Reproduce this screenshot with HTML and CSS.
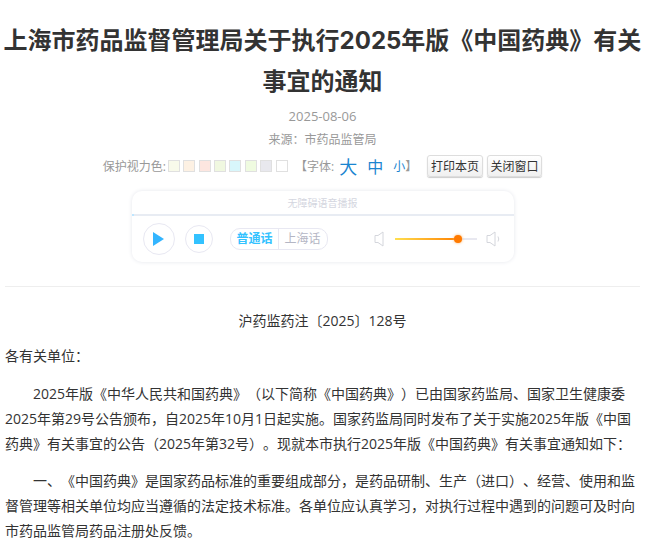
FILE: index.html
```html
<!DOCTYPE html>
<html lang="zh-CN">
<head>
    <meta charset="UTF-8">
    <title>上海市药品监督管理局关于执行2025年版《中国药典》有关事宜的通知</title>
    <link rel="stylesheet" href="styles.css">
</head>
<body>
    <div class="container">
        <h1 class="title">上海市药品监督管理局关于执行2025年版《中国药典》有关事宜的通知</h1>
        <div class="date">2025-08-06</div>
        <div class="source">来源：市药品监管局</div>
        <div class="tools">
            <span class="tools-label">保护视力色:</span>
            <span class="swatch s1"></span>
            <span class="swatch s2"></span>
            <span class="swatch s3"></span>
            <span class="swatch s4"></span>
            <span class="swatch s5"></span>
            <span class="swatch s6"></span>
            <span class="swatch s7"></span>
            <span class="swatch s8"></span>
            <span class="font-label">【字体:</span>
            <span class="size-big">大</span>
            <span class="size-mid">中</span>
            <span class="size-small">小</span>
            <span class="font-end">】</span>
            <button class="tool-button">打印本页</button>
            <button class="tool-button">关闭窗口</button>
        </div>
        <div class="player">
            <div class="player-title">无障碍语音播报<span class="progress-dot"></span></div>
            <div class="player-bar">
                <span class="round-button play">
                    <svg width="11" height="14" viewBox="0 0 11 14"><path d="M0 0L11 7L0 14Z" fill="#33b5ff"/></svg>
                </span>
                <span class="round-button stop"><span class="stop-square"></span></span>
                <div class="lang">
                    <span class="lang-item active">普通话</span>
                    <span class="lang-item">上海话</span>
                </div>
                <div class="volume">
                    <svg width="10" height="16" viewBox="0 0 10 16"><path d="M9 1V15L4 11.5H1V4.500H4Z" fill="none" stroke="#d4d6dc"/></svg>
                    <div class="track">
                        <div class="track-fill"></div>
                        <span class="track-knob"></span>
                    </div>
                    <svg width="16" height="16" viewBox="0 0 16 16"><path d="M9 1V15L4 11.500H1V4.500H4Z" fill="none" stroke="#d4d6dc"/><path d="M12 5.500Q13.500 8 12 10.500" fill="none" stroke="#d4d6dc"/></svg>
                </div>
            </div>
        </div>
        <div class="article">
            <p class="doc-no">沪药监药注〔2025〕128号</p>
            <p class="greeting">各有关单位：</p>
            <p class="para">2025年版《中华人民共和国药典》（以下简称《中国药典》）已由国家药监局、国家卫生健康委2025年第29号公告颁布，自2025年10月1日起实施。国家药监局同时发布了关于实施2025年版《中国药典》有关事宜的公告（2025年第32号）。现就本市执行2025年版《中国药典》有关事宜通知如下：</p>
            <p class="para">一、《中国药典》是国家药品标准的重要组成部分，是药品研制、生产（进口）、经营、使用和监督管理等相关单位均应当遵循的法定技术标准。各单位应认真学习，对执行过程中遇到的问题可及时向市药品监管局药品注册处反馈。</p>
        </div>
    </div>
</body>
</html>
```

FILE: styles.css
```css
body {
    margin: 0;
    background: #fff;
    font-family: "Open Sans", "Noto Sans CJK SC", sans-serif;
    color: #333;
    height: 546px;
    overflow: hidden;
    text-spacing-trim: space-all;
}
.container {
    padding: 20px 11px 0 5px;
}
.title {
    margin: 0 -2px;
    font-family: Inter, "Noto Sans CJK SC", sans-serif;
    font-size: 24px;
    line-height: 41px;
    font-weight: bold;
    text-align: center;
    color: #333;
}
.date, .source {
    font-size: 12px;
    color: #999;
    text-align: center;
}
.date {
    margin-top: 4px;
    line-height: 20px;
    font-size: 13px;
}
.source {
    margin-top: 4px;
    line-height: 20px;
}
.tools {
    display: flex;
    justify-content: center;
    align-items: center;
    height: 24px;
    margin-top: 4px;
    font-size: 12px;
    color: #999;
}
.tools-label {
    margin-right: 2px;
}
.swatch {
    box-sizing: border-box;
    width: 12px;
    height: 12px;
    margin-right: 3.400px;
    border: 1px solid #e0e0e0;
}
.s1 { background: #f8faea; }
.s2 { background: #fdf1e3; }
.s3 { background: #fde6e0; }
.s4 { background: #f0f8e0; }
.s5 { background: #d8f6fb; }
.s6 { background: #effbe0; }
.s7 { background: #e8e8ee; }
.s8 { background: #fff; }
.font-label {
    margin-left: 4px;
}
.size-big, .size-mid, .size-small {
    color: #1a85d0;
}
.size-big {
    font-size: 18px;
    margin-left: 5px;
}
.size-mid {
    font-size: 16px;
    margin-left: 10px;
}
.size-small {
    font-size: 12px;
    margin-left: 10px;
}
.font-end {
    margin-right: 6px;
}
.tool-button {
    width: 55.500px;
    height: 22px;
    margin-left: 4px;
    padding: 0;
    font-family: inherit;
    font-size: 12px;
    color: #333;
    background: linear-gradient(#fff, #f0f0f0);
    border: 1px solid #ddd;
    border-radius: 3px;
    box-shadow: 0 1px 1px #ccc;
}
.player {
    width: 382px;
    margin: 13px auto 0;
    border-radius: 10px;
    box-shadow: 0 0 4px #e4e6ec;
}
.player-title {
    position: relative;
    height: 23px;
    line-height: 24px;
    border-bottom: 2px solid #e8ecf3;
    font-size: 10px;
    color: #d4d6e0;
    text-align: center;
}
.progress-dot {
    position: absolute;
    left: 0;
    bottom: -2px;
    width: 2px;
    height: 2px;
    background: #bfe6ff;
}
.player-bar {
    display: flex;
    align-items: center;
    height: 46px;
    padding-left: 11px;
}
.round-button {
    display: flex;
    justify-content: center;
    align-items: center;
    box-sizing: border-box;
    border: 1px solid #e8e8f2;
    border-radius: 50%;
}
.play {
    width: 32px;
    height: 32px;
}
.stop {
    width: 28px;
    height: 28px;
    margin-left: 10px;
}
.stop-square {
    width: 10px;
    height: 10px;
    background: #33c2ff;
}
.lang {
    display: flex;
    height: 20px;
    margin-left: 17px;
    border: 1px solid #e8e8f2;
    border-radius: 10px;
    font-size: 12px;
    line-height: 20px;
    color: #b4b6c4;
}
.lang-item {
    padding: 0 6px;
}
.lang-item.active {
    padding-right: 5px;
    color: #33c2ff;
    font-weight: bold;
    border-right: 1px solid #e8e8f2;
}
.volume {
    display: flex;
    align-items: center;
    margin-left: 46px;
}
.track {
    position: relative;
    width: 82px;
    height: 2px;
    margin: 0 9px 0 11px;
    background: #e8e8f0;
}
.track-fill {
    width: 64px;
    height: 2px;
    background: linear-gradient(to right, #ffdf50, #ff8000);
}
.track-knob {
    position: absolute;
    left: 59px;
    top: -3px;
    width: 8px;
    height: 8px;
    border-radius: 50%;
    background: #ff7a00;
    box-shadow: 0 0 3px #ffb060;
}
.article {
    margin-top: 24px;
    border-top: 1px solid #eee;
    padding-top: 21px;
    font-size: 14px;
    line-height: 25px;
}
.article p {
    margin: 0 0 10px;
}
.article .greeting {
    margin-bottom: 13px;
}
.doc-no {
    text-align: center;
}
.article .para {
    margin-bottom: 12px;
    text-indent: 2em;
}
```
